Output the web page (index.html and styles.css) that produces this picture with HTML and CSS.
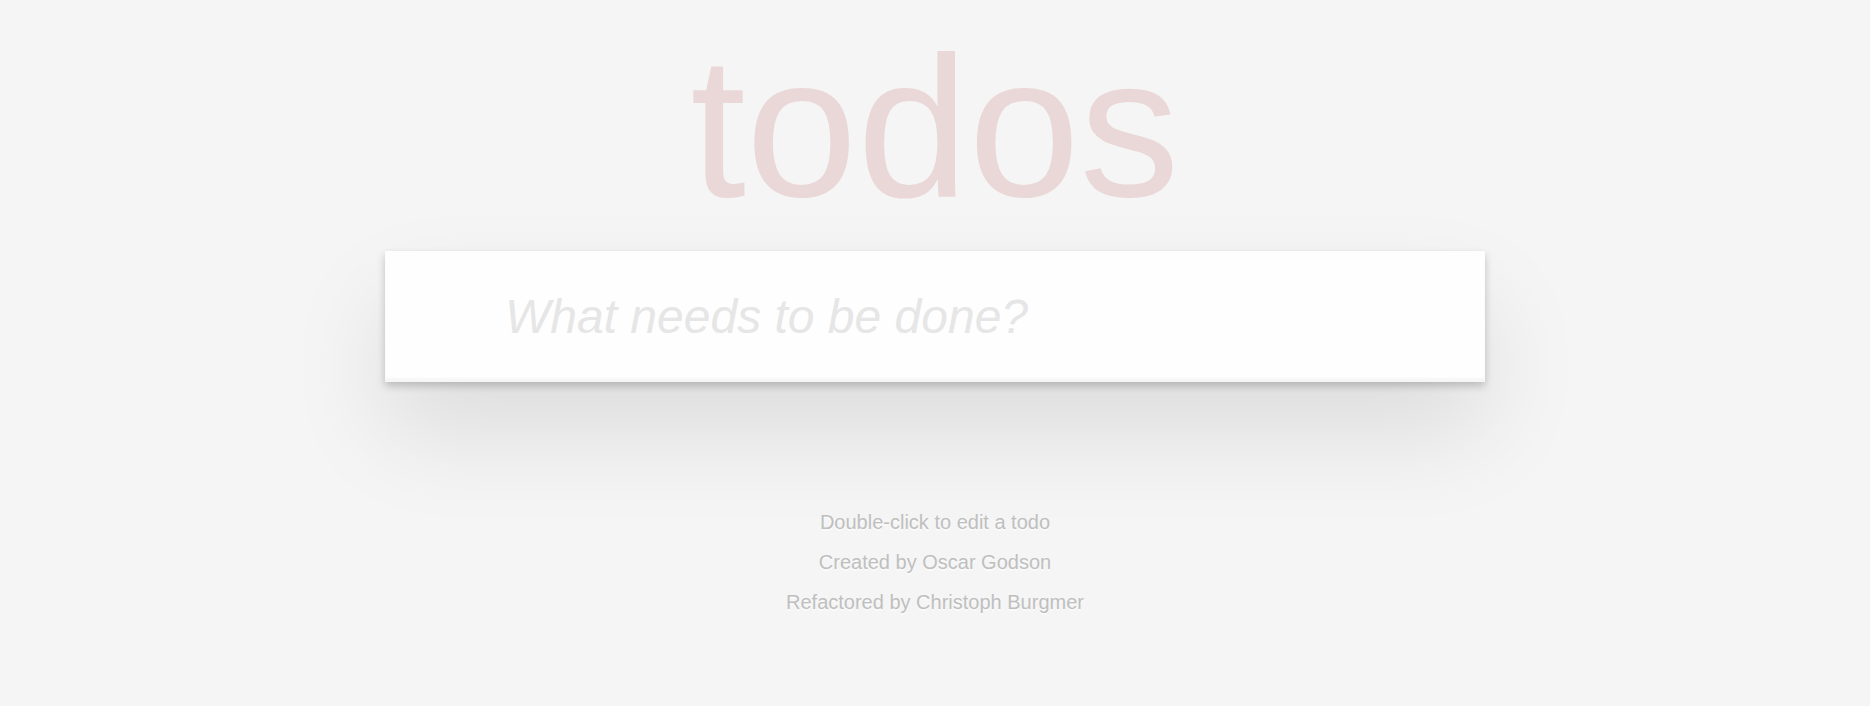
FILE: index.html
```html
<!DOCTYPE html>
<html lang="en">
<head>
<meta charset="utf-8">
<title>Todos</title>
<link rel="stylesheet" href="styles.css">
</head>
<body>
<section class="todoapp">
  <header class="header">
    <h1 class="title">todos</h1>
    <input class="new-todo" placeholder="What needs to be done?">
  </header>
</section>
<footer class="info">
  <p>Double-click to edit a todo</p>
  <p>Created by Oscar Godson</p>
  <p>Refactored by Christoph Burgmer</p>
</footer>
</body>
</html>
```
FILE: styles.css
```css
html, body {
  margin: 0;
  padding: 0;
}

body {
  background: #f5f5f5;
  color: #4d4d4d;
  font-family: "Liberation Sans", Arial, Helvetica, sans-serif;
  min-height: 706px;
}

.todoapp {
  width: 1100px;
  margin: 0 auto;
}

.header {
  display: flex;
  flex-direction: column;
}

.title {
  margin: 0 0 24px;
  padding-top: 27px;
  height: 200px;
  font-size: 200px;
  line-height: 200px;
  font-weight: 100;
  text-align: center;
  color: rgba(175, 47, 47, 0.15);
  text-rendering: optimizeLegibility;
}

.new-todo {
  display: block;
  box-sizing: border-box;
  width: 100%;
  margin: 0;
  padding: 32px 32px 32px 120px;
  border: none;
  outline: none;
  font-family: inherit;
  font-size: 48px;
  line-height: 67.2px;
  height: 131.2px;
  color: inherit;
  background: #fefefe;
  box-shadow: inset 0 -4px 2px rgba(0, 0, 0, 0.03),
              0 4px 8px 0 rgba(0, 0, 0, 0.2),
              0 50px 100px 0 rgba(0, 0, 0, 0.1);
}

.new-todo::placeholder {
  font-style: italic;
  font-weight: 300;
  color: #e6e6e6;
}

.info {
  margin: 130px auto 0;
  color: #bfbfbf;
  font-size: 20px;
  text-align: center;
  text-shadow: 0 2px 0 rgba(255, 255, 255, 0.5);
}

.info p {
  margin: 20px 0;
  line-height: 20px;
}

.info p:first-child {
  margin-top: 0;
}
```
